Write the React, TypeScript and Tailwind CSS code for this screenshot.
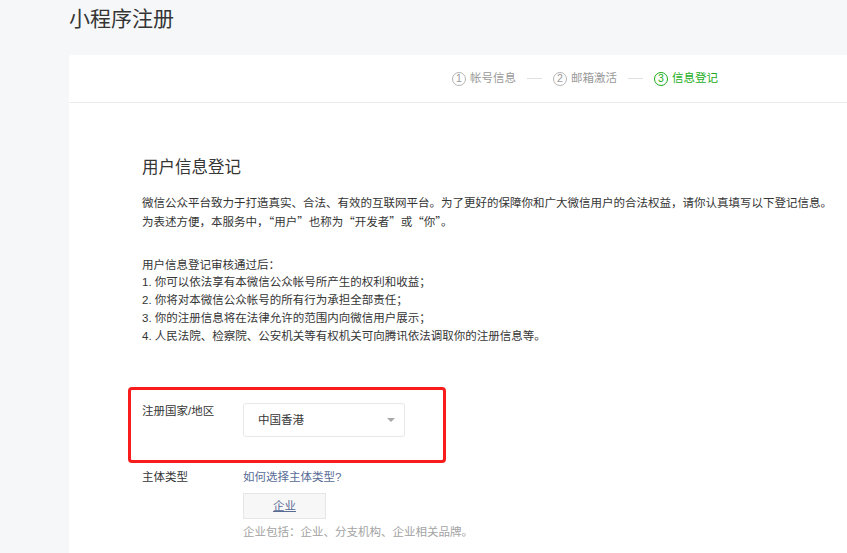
const FONT = "font-['Liberation_Sans','Noto_Sans_CJK_SC',sans-serif]";
const CJK = "font-['Noto_Sans_CJK_SC',sans-serif] [font-feature-settings:'fwid']";

const STEPS = [
  { n: 1, label: '帐号信息', active: false },
  { n: 2, label: '邮箱激活', active: false },
  { n: 3, label: '信息登记', active: true },
];

const RULES = [
  '1. 你可以依法享有本微信公众帐号所产生的权利和收益；',
  '2. 你将对本微信公众帐号的所有行为承担全部责任；',
  '3. 你的注册信息将在法律允许的范围内向微信用户展示；',
  '4. 人民法院、检察院、公安机关等有权机关可向腾讯依法调取你的注册信息等。',
];

function Steps() {
  return (
    <div className="flex items-center">
      {STEPS.map((step, i) => (
        <div key={step.n} className="flex items-center">
          {i > 0 && <span className="mx-[11px] h-px w-[15px] bg-[#e0e0e0]" />}
          <span
            className={`flex h-[14px] w-[14px] items-center justify-center rounded-full border text-[10.5px] leading-none ${
              step.active ? 'border-[#1aad19] text-[#1aad19]' : 'border-[#b5b5b5] text-[#9a9a9a]'
            }`}
          >
            {step.n}
          </span>
          <span className={`ml-[4px] text-[11.5px] ${step.active ? 'text-[#1aad19]' : 'text-[#9a9a9a]'}`}>{step.label}</span>
        </div>
      ))}
    </div>
  );
}

export default function App() {
  return (
    <div lang="zh-CN" className={`h-[553px] w-full overflow-hidden bg-[#f6f7f9] text-[#353535] ${FONT}`}>
      <div className="h-[55px] pl-[69px] text-[21px] leading-[38px] text-[#353535]">小程序注册</div>

      <div className="ml-[69px] min-h-[498px] rounded-tl-[3px] bg-white">
        <div className="flex h-[48px] items-center border-b border-[#ececef] pl-[383px]">
          <Steps />
        </div>

        <div className="pl-[73px] pt-[52px]">
          <h2 className="text-[16.5px] font-normal leading-[24px]">用户信息登记</h2>

          <p className="mt-[16px] text-[11.5px] leading-[17.75px]">
            微信公众平台致力于打造真实、合法、有效的互联网平台。为了更好的保障你和广大微信用户的合法权益，请你认真填写以下登记信息。
            <br />
            <span className={CJK}>为表述方便，本服务中，“用户”也称为“开发者”或“你”。</span>
          </p>

          <div className="mt-[25px] text-[11.5px] leading-[17.75px]">
            <p>用户信息登记审核通过后：</p>
            {RULES.map((rule) => (
              <p key={rule}>{rule}</p>
            ))}
          </div>

          <div className="relative mt-[58px] flex items-start">
            <div className="pointer-events-none absolute -left-[14px] -top-[16px] h-[76px] w-[318px] rounded-[4px] border-[3px] border-[#f81c1c]" />
            <div className="w-[101px] text-[11.5px] leading-[17.75px]">注册国家/地区</div>
            <div className="flex h-[34px] w-[162px] items-center justify-between rounded-[3px] border border-[#e8e8ec] pl-[14px] pr-[9px] text-[11.5px]">
              <span>中国香港</span>
              <span className="h-0 w-0 border-x-[4px] border-t-[4px] border-x-transparent border-t-[#a8a8a8]" />
            </div>
          </div>

          <div className="mt-[31px] flex items-start text-[11.5px] leading-[18px]">
            <div className="w-[101px]">主体类型</div>
            <div>
              <a className="text-[#576b95]">如何选择主体类型?</a>
              <div className="mt-[7px] flex h-[26px] w-[83px] items-center justify-center border border-[#e6e6e6] bg-[#f7f7f7]">
                <span className="text-[#576b95] underline">企业</span>
              </div>
              <div className="mt-[4px] text-[#a3a3a3]">企业包括：企业、分支机构、企业相关品牌。</div>
            </div>
          </div>
        </div>
      </div>
    </div>
  );
}
